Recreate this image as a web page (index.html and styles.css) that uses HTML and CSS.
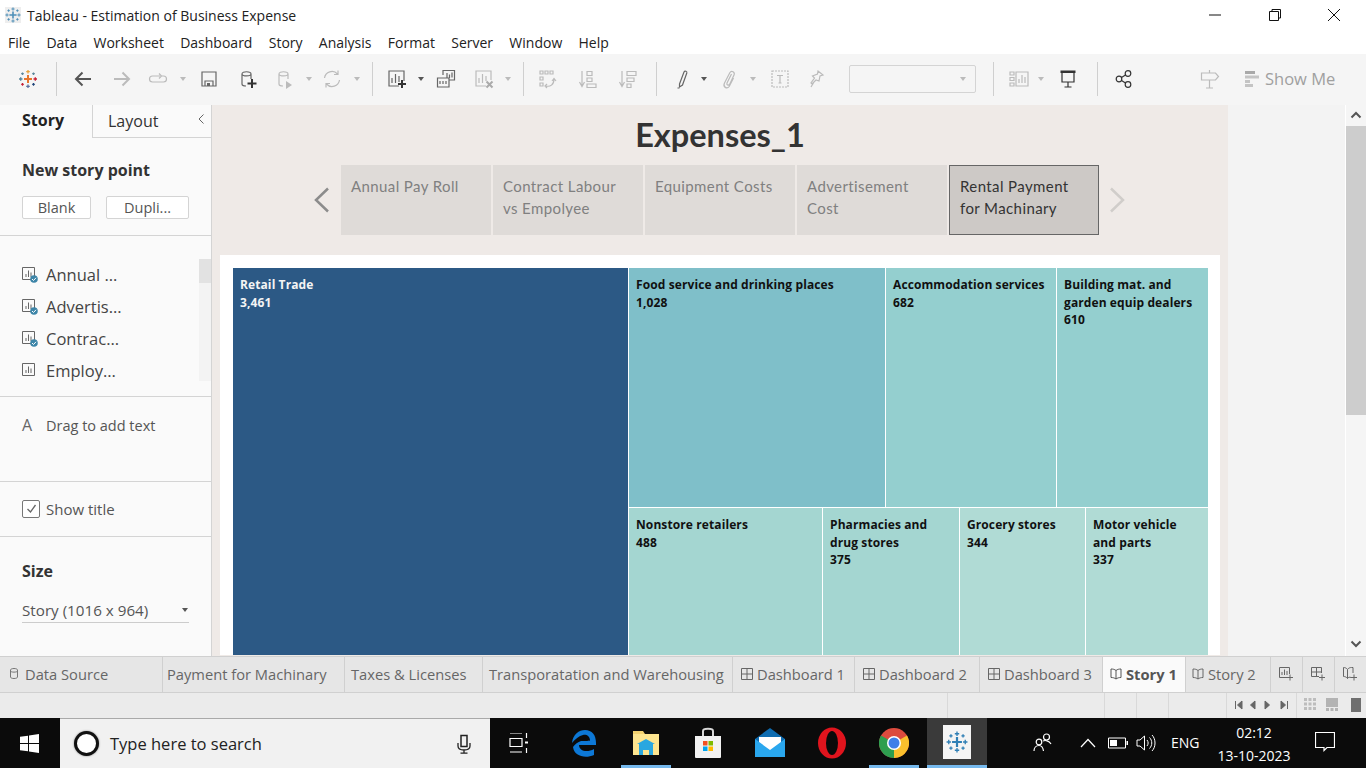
FILE: index.html
```html
<!DOCTYPE html>
<html lang="en">
<head>
    <meta charset="UTF-8">
    <title>Tableau - Estimation of Business Expense</title>
    <link rel="stylesheet" href="styles.css">
</head>
<body>
    <svg class="defs" width="0" height="0">
        <symbol id="sheet" viewBox="0 0 14 14"><path d="M.5.5h12v12H.5z" fill="none" stroke="currentColor"/><path d="M4 10V7M6.500 10V3.500M9 10V5.500" stroke="currentColor" fill="none"/></symbol>
        <symbol id="check" viewBox="0 0 8 8"><circle cx="4" cy="4" r="3.800" fill="#3d85a8"/><path d="M2 4l1.500 1.500L6 2.800" fill="none" stroke="#fff"/></symbol>
        <symbol id="tab-dash" viewBox="0 0 12 12"><path d="M.5.5h11v11H.5zM6 .5v11M.5 6h11" fill="none" stroke="currentColor"/></symbol>
        <symbol id="tab-story" viewBox="0 0 12 12"><path d="M6 2.500C4.500 1.300 3 1 1 1v8.500c2 0 3.500.4 5 1.500 1.500-1.100 3-1.500 5-1.500V1C9 1 7.500 1.300 6 2.500zM6 2.500V11" fill="none" stroke="currentColor"/></symbol>
        <symbol id="logo" viewBox="0 0 20 20"><path d="M10 5.500v9M5.500 10h9" stroke-width="2" stroke="currentColor"/><path d="M10 .5v4M8 2.500h4M10 15.500v4M8 17.500h4M.5 10h4M2.500 8v4M15.500 10h4M17.500 8v4M4.500 3v3M3 4.500h3M15.500 3v3M14 4.500h3M4.500 14v3M3 15.500h3M15.500 14v3M14 15.500h3" stroke-width="1.200" stroke="currentColor" fill="none"/></symbol>
    </svg>

    <div class="titlebar">
        <svg class="app-icon" width="16" height="16"><use href="#logo"/></svg>
        <span class="app-title">Tableau - Estimation of Business Expense</span>
        <div class="win-buttons">
            <svg width="14" height="14" viewBox="0 0 14 14"><path d="M1 7h12" stroke="#111"/></svg>
            <svg width="14" height="14" viewBox="0 0 14 14"><path d="M1.500 3.500h9v9h-9zM4 3.500V1.500h8.500V10h-2" fill="none" stroke="#111"/></svg>
            <svg width="14" height="14" viewBox="0 0 14 14"><path d="M1 1l12 12M13 1L1 13" stroke="#111"/></svg>
        </div>
    </div>

    <div class="menubar">
        <span>File</span><span>Data</span><span>Worksheet</span><span>Dashboard</span><span>Story</span><span>Analysis</span><span>Format</span><span>Server</span><span>Window</span><span>Help</span>
    </div>

    <div class="toolbar">
        <svg class="ti logo-multi" viewBox="0 0 20 20"><path d="M10 6v8" stroke="#e8762c" stroke-width="2"/><path d="M6 10h8" stroke="#e8762c" stroke-width="2"/><path d="M10 1v3.500M8.200 2.700h3.600" stroke="#e8a33d" stroke-width="1.300"/><path d="M10 15.500V19M8.200 17.300h3.600" stroke="#5b6f9e" stroke-width="1.300"/><path d="M1 10h3.500M2.700 8.200v3.600" stroke="#59879b" stroke-width="1.300"/><path d="M15.500 10H19M17.300 8.200v3.600" stroke="#c72035" stroke-width="1.300"/><path d="M4.500 3.500v2.500M3.200 4.700h2.600M15.500 3.500v2.500M14.200 4.700h2.600" stroke="#5b879b" stroke-width="1.200"/><path d="M4.500 14v2.800M3.200 15.400h2.600" stroke="#c72035" stroke-width="1.200"/><path d="M15.500 14v2.800M14.200 15.400h2.600" stroke="#1f447a" stroke-width="1.200"/></svg>
        <i class="tsep ml-18"></i>
        <svg class="ti ml-16" viewBox="0 0 20 20"><path d="M18 10H3M9.500 3.500L3 10l6.500 6.500" class="ic-dark"/></svg>
        <svg class="ti ml-19" viewBox="0 0 20 20"><path d="M2 10h15M10.500 3.500L17 10l-6.500 6.500" class="ic-faint-bold"/></svg>
        <svg class="ti ml-16" viewBox="0 0 20 20"><path d="M12 7H4.500a2.500 2.500 0 0 0 0 6h11a2.500 2.500 0 0 0 0-6H14M11 4.500L13.500 7 11 9.500" class="ic-faint"/></svg>
        <i class="caret ml-12"></i>
        <svg class="ti ml-12" viewBox="0 0 20 20"><path d="M3 3h14v14H3zM6 17v-5h8v5" class="ic-mid"/><path d="M8 14h3v3H8z" fill="#666"/></svg>
        <svg class="ti ml-19" viewBox="0 0 20 20"><path d="M4 5c0-3 9-3 9 0v5M4 5c0 2.500 9 2.500 9 0M4 5v10c0 1 1.500 2 4 2" class="ic-mid"/><path d="M14 10v9M9.500 14.500h9" stroke="#333" stroke-width="2"/></svg>
        <svg class="ti ml-17" viewBox="0 0 20 20"><path d="M4 5c0-3 9-3 9 0v5M4 5c0 2.500 9 2.500 9 0M4 5v10c0 1 1.500 2 4 2" class="ic-faint"/><path d="M11 12l6 4-6 4z" fill="#bbb"/></svg>
        <i class="caret ml-11"></i>
        <svg class="ti ml-9" viewBox="0 0 20 20"><path d="M2.500 9a7.500 7.500 0 0 1 13-4M17.500 11a7.500 7.500 0 0 1-13 4M16 1.500V5.500h-4M4 18.500V14.500h4" class="ic-faint"/></svg>
        <i class="caret ml-12"></i>
        <i class="tsep ml-11"></i>
        <svg class="ti ml-14" viewBox="0 0 20 20"><path d="M12 17H2V2h15v10" class="ic-mid"/><path d="M5 14V9M8.500 14V5M12 13V7" class="ic-mid"/><path d="M15 11v8M11 15h8" stroke="#333" stroke-width="2"/></svg>
        <i class="caret caret-dark ml-11"></i>
        <svg class="ti ml-11" viewBox="0 0 20 20"><path d="M7 6V1.500h11.500V11H13" class="ic-mid"/><path d="M1.500 9H13v9H1.500zM11 4v5M13.500 5.500V9M16 3.500v5M4 12v3M7 12v3M10 12v3" class="ic-mid"/></svg>
        <svg class="ti ml-18" viewBox="0 0 20 20"><path d="M12 17H2V2h15v9" class="ic-faint"/><path d="M5 14V9M8.500 14V5M12 12V7" class="ic-faint"/><path d="M12.500 12.500l6 6M18.500 12.500l-6 6" stroke="#aaa" stroke-width="2"/></svg>
        <i class="caret ml-11"></i>
        <i class="tsep ml-11"></i>
        <svg class="ti ml-14" viewBox="0 0 20 20"><path d="M2 2h3v3H2zM7 2h3v3H7zM12 2h3v3h-3zM2 8h3v3H2zM2 14h3v3H2zM8 17c4 1 8-1 8-7M14 12l2-2.500 2 2.500M9 15l-2 2 2 2" class="ic-faint"/></svg>
        <svg class="ti ml-20" viewBox="0 0 20 20"><path d="M4 2v15M1.500 13L4 17.500 6.500 13M9 2.500h5v4H9zM9 9h5v3.500H9zM9 15h9v3.500H9z" class="ic-faint"/></svg>
        <svg class="ti ml-20" viewBox="0 0 20 20"><path d="M4 2v15M1.500 13L4 17.500 6.500 13M9 2.500h9v4H9zM9 9h7v3.500H9zM9 15h4v3.500H9z" class="ic-faint"/></svg>
        <i class="tsep ml-18"></i>
        <svg class="ti ml-16" viewBox="0 0 20 20"><path d="M6.500 15l4.500-12c.8-1.500 3.300-.7 2.800 1L9.500 16l-3 2zM4.500 19h2" class="ic-mid"/></svg>
        <i class="caret caret-dark ml-8"></i>
        <svg class="ti ml-11" viewBox="0 0 20 20"><path d="M12.500 5L8 14c-.8 2 1.500 3 2.700 1.200L15 6c1.300-3-2.500-5-4.200-2.300L5.500 14c-2 4 2.500 6.500 4.700 3.500L14.500 9" class="ic-faint"/></svg>
        <i class="caret ml-11"></i>
        <svg class="ti ml-13" viewBox="0 0 20 20"><path d="M2 2h16v16H2z" class="ic-faint dashed"/><path d="M7 6.500h6M10 6.500v7.500M8.500 14h3" class="ic-faint"/></svg>
        <svg class="ti ml-17" viewBox="0 0 20 20"><path d="M11 2l5 4-3 1-1 5-3-1-4 4-1-1 3.500-5-2-2 5-2zM4 18l3-5" class="ic-faint"/></svg>
        <div class="tselect ml-22"><i class="caret"></i></div>
        <i class="tsep ml-17"></i>
        <svg class="ti ml-15" viewBox="0 0 20 20"><path d="M1 3h4v3H1zM1 8.500h4v3H1zM1 14h4v3H1zM7 3h12v14H7zM10 14v-4M13 14V6M16 14v-6" class="ic-faint"/></svg>
        <i class="caret ml-9"></i>
        <svg class="ti ml-13" viewBox="0 0 20 20"><path d="M4 3v10h12V3M10 13v5M6.500 18h7" class="ic-dark-thin"/><path d="M2.500 1.500h15v2.500h-15z" fill="#333"/></svg>
        <i class="tsep ml-19"></i>
        <svg class="ti ml-16" viewBox="0 0 20 20"><circle cx="5" cy="10" r="2.800" class="ic-dark-thin"/><circle cx="14" cy="4.500" r="2.800" class="ic-dark-thin"/><circle cx="14" cy="15.500" r="2.800" class="ic-dark-thin"/><path d="M7.500 8.500l4-2.500M7.500 11.500l4 2.500" class="ic-dark-thin"/></svg>
        <svg class="ti ml-66" viewBox="0 0 20 20"><path d="M1.500 4h14l3 3.500-3 3.500h-14zM9.500 1v3M9.500 11v8M6 19h7" class="ic-faint"/></svg>
        <svg class="showme-icon ml-25" viewBox="0 0 14 16"><path d="M0 0h10v3H0z" fill="#a9a9a9"/><path d="M0 4.500h14v3H0z" fill="#c4c4c4"/><path d="M0 9h5v3H0zM0 13h8v3H0z" fill="#c4c4c4"/></svg>
        <span class="showme">Show Me</span>
    </div>

    <div class="main">
        <aside class="panel">
            <div class="panel-tabs">
                <div class="ptab ptab-on">Story</div>
                <div class="ptab ptab-off">Layout<svg class="collapse" width="8" height="12" viewBox="0 0 8 12"><path d="M6.500 1.500L2 6l4.500 4.500" fill="none" stroke="#666"/></svg></div>
            </div>
            <section class="psec sec-new">
                <h3>New story point</h3>
                <div class="pbtns">
                    <button class="pbtn btn-blank">Blank</button>
                    <button class="pbtn btn-dup">Dupli...</button>
                </div>
            </section>
            <section class="psec sec-list">
                <div class="sheet-list">
                    <div class="sheet-row"><span class="sheet-ic"><svg width="14" height="14"><use href="#sheet"/></svg><svg class="tick" width="8" height="8"><use href="#check"/></svg></span>Annual ...</div>
                    <div class="sheet-row"><span class="sheet-ic"><svg width="14" height="14"><use href="#sheet"/></svg><svg class="tick" width="8" height="8"><use href="#check"/></svg></span>Advertis...</div>
                    <div class="sheet-row"><span class="sheet-ic"><svg width="14" height="14"><use href="#sheet"/></svg><svg class="tick" width="8" height="8"><use href="#check"/></svg></span>Contrac...</div>
                    <div class="sheet-row"><span class="sheet-ic"><svg width="14" height="14"><use href="#sheet"/></svg></span>Employ...</div>
                </div>
                <div class="list-scroll"><div class="list-thumb"></div></div>
            </section>
            <section class="psec sec-text">
                <span class="big-a">A</span><span>Drag to add text</span>
            </section>
            <section class="psec sec-check">
                <span class="checkbox"><svg width="11" height="10" viewBox="0 0 11 10"><path d="M1.500 5l3 3 5-7" fill="none" stroke="#666" stroke-width="1.300"/></svg></span><span>Show title</span>
            </section>
            <section class="sec-size">
                <h3>Size</h3>
                <div class="size-select">Story (1016 x 964)<i class="caret caret-dark"></i></div>
            </section>
        </aside>

        <div class="canvas">
            <h1 class="story-title">Expenses_1</h1>
            <div class="story-nav">
                <svg class="nav-arrow" width="18" height="26" viewBox="0 0 18 26"><path d="M15 1.500L3 13l12 11.500" fill="none" stroke="#8c8c8c" stroke-width="2.500"/></svg>
                <div class="point">Annual Pay Roll</div>
                <div class="point">Contract Labour vs Empolyee</div>
                <div class="point">Equipment Costs</div>
                <div class="point">Advertisement Cost</div>
                <div class="point point-on">Rental Payment for Machinary</div>
                <svg class="nav-arrow" width="18" height="26" viewBox="0 0 18 26"><path d="M3 1.500L15 13 3 24.500" fill="none" stroke="#d0cdca" stroke-width="2.500"/></svg>
            </div>
            <div class="viz-card">
                <div class="treemap">
                    <div class="cell cell-retail"><b>Retail Trade</b><b>3,461</b></div>
                    <div class="tm-right">
                        <div class="tm-row tm-top">
                            <div class="cell cell-food"><b>Food service and drinking places</b><b>1,028</b></div>
                            <div class="cell cell-mid w-acc"><b>Accommodation services</b><b>682</b></div>
                            <div class="cell cell-mid w-build"><b>Building mat. and garden equip dealers</b><b>610</b></div>
                        </div>
                        <div class="tm-row tm-bottom">
                            <div class="cell cell-low w-non"><b>Nonstore retailers</b><b>488</b></div>
                            <div class="cell cell-low w-pharm"><b>Pharmacies and drug stores</b><b>375</b></div>
                            <div class="cell cell-pale w-groc"><b>Grocery stores</b><b>344</b></div>
                            <div class="cell cell-pale w-motor"><b>Motor vehicle and parts</b><b>337</b></div>
                        </div>
                    </div>
                </div>
            </div>
        </div>

        <div class="gutter"></div>
        <div class="vscroll">
            <svg width="12" height="8" viewBox="0 0 12 8"><path d="M1.500 6.500L6 2l4.500 4.500" fill="none" stroke="#555" stroke-width="2"/></svg>
            <div class="vthumb"></div>
            <svg width="12" height="8" viewBox="0 0 12 8"><path d="M1.500 1.500L6 6l4.500-4.500" fill="none" stroke="#555" stroke-width="2"/></svg>
        </div>
    </div>

    <div class="tabs">
        <div class="tab tab-source"><svg width="8" height="11" viewBox="0 0 8 11"><path d="M.5 2c0-2 7-2 7 0v7c0 2-7 2-7 0zM.5 3c0 1.500 7 1.500 7 0" fill="none" stroke="#777"/></svg>Data Source</div>
        <div class="tab tab-pay">Payment for Machinary</div>
        <div class="tab tab-tax">Taxes &amp; Licenses</div>
        <div class="tab tab-trans">Transporatation and Warehousing</div>
        <div class="tab tab-d1"><svg width="12" height="12"><use href="#tab-dash"/></svg>Dashboard 1</div>
        <div class="tab tab-d2"><svg width="12" height="12"><use href="#tab-dash"/></svg>Dashboard 2</div>
        <div class="tab tab-d3"><svg width="12" height="12"><use href="#tab-dash"/></svg>Dashboard 3</div>
        <div class="tab tab-on"><svg width="12" height="12"><use href="#tab-story"/></svg>Story 1</div>
        <div class="tab tab-s2"><svg width="12" height="12"><use href="#tab-story"/></svg>Story 2</div>
        <div class="tab tab-new"><svg width="16" height="16" viewBox="0 0 16 16"><path d="M10 11.500H1.500V1.500h10V8M4 9V6M6.500 9V3.500M9 9V5M12 8.500v6M9 11.500h6" fill="none" stroke="#666"/></svg></div>
        <div class="tab tab-new"><svg width="16" height="16" viewBox="0 0 16 16"><path d="M9 10.500H1.500v-9h10V7M6.500 1.500v9M1.500 6h10M12 8.500v6M9 11.500h6" fill="none" stroke="#666"/></svg></div>
        <div class="tab tab-new"><svg width="16" height="16" viewBox="0 0 16 16"><path d="M9 11.500c-1.500-.5-2.500-.5-3.500 1-1-1.500-2.500-2-4-2v-9c1.500 0 3 .5 4 2 1-1.500 2.500-2 4-2h1.500V7M5.500 3.500v9M12 8.500v6M9 11.500h6" fill="none" stroke="#666"/></svg></div>
    </div>

    <div class="statusbar">
        <i class="st st-1"></i><i class="st st-2"></i><i class="st st-3"></i><i class="st st-4"></i><i class="st st-5"></i>
        <svg class="pager" width="60" height="10" viewBox="0 0 60 10"><path d="M1.500 1v8M8 1L3.500 5 8 9zM21 1l-4.500 4L21 9zM31 1l4.500 4L31 9zM47 1l4.500 4L47 9zM53.500 1v8" fill="#666" stroke="#666"/></svg>
        <i class="st st-6"></i>
        <svg class="views" width="58" height="14" viewBox="0 0 58 14"><path d="M0 0h3v3H0zM4.500 0h3v3h-3zM9 0h3v3H9zM0 4.500h3v3H0zM4.500 4.500h3v3h-3zM9 4.500h3v3H9zM0 9h3v3H0zM4.500 9h3v3h-3zM9 9h3v3H9z" fill="#bdbdbd"/><path d="M22 0h12v9H22zM22 10h3v3h-3zM26.500 10h3v3h-3zM31 10h3v3h-3z" fill="#b3b3b3"/><path d="M47 0h10v14H47z" fill="#6f6f6f"/></svg>
    </div>

    <div class="taskbar">
        <svg class="start" width="19" height="19" viewBox="0 0 19 19"><path d="M0 2.800l8-1.100v7.300H0zM9 1.500L19 0v9H9zM0 10h8v7.300l-8-1.100zM9 10h10v9L9 17.500z" fill="#fff"/></svg>
        <div class="searchbox">
            <span class="cortana"></span>
            <span class="search-text">Type here to search</span>
            <svg width="14" height="20" viewBox="0 0 14 20"><path d="M4 1.500h6v11H4z" fill="none" stroke="#222" stroke-width="1.500"/><path d="M1 9v3c0 3 2.500 4 6 4s6-1 6-4V9M7 16v3M3.500 19.200h7" fill="none" stroke="#222" stroke-width="1.300"/></svg>
        </div>
        <div class="task-apps">
            <div class="task w-view"><svg width="20" height="20" viewBox="0 0 20 20"><path d="M1 0h12M1 5.500h12v8H1zM1 19h12M17.500 0v5M17.500 15v5" fill="none" stroke="#fff" stroke-width="1.200"/><path d="M16 8.500h3v2h-3z" fill="#fff"/></svg></div>
            <div class="task"><svg width="26" height="28" viewBox="0 0 26 28"><path d="M1 14C2 5 8 1 14 1c7 0 11 5 11 13v2H8c0 6 8 8 15 4v6c-9 4-20 1-21-8 2-3 5-5 8-6 1 0 8 0 9-.500C19 7 15 5 12 6 8 7 4 10 1 14z" fill="#0d78d6"/></svg></div>
            <div class="task task-open"><svg width="28" height="28" viewBox="0 0 28 28"><path d="M1 2h10l2 3H1z" fill="#f3d26f"/><path d="M1 5h26v21H1z" fill="#fde58f"/><path d="M7 26V15h14v11h-4v-5h-6v5z" fill="#29a7e0"/><path d="M5 15l9-5 9 5z" fill="#29a7e0"/></svg></div>
            <div class="task"><svg width="30" height="32" viewBox="0 0 30 32"><path d="M2 9h26v21a1 1 0 0 1-1 1H3a1 1 0 0 1-1-1z" fill="#f2f2f2"/><path d="M10 9V4c0-3 10-3 10 0v5" fill="none" stroke="#d8d8d8" stroke-width="2"/><path d="M10 14h4.500v4.500H10z" fill="#f25022"/><path d="M15.500 14H20v4.500h-4.500z" fill="#7fba00"/><path d="M10 19.500h4.500V24H10z" fill="#00a4ef"/><path d="M15.500 19.500H20V24h-4.500z" fill="#ffb900"/></svg></div>
            <div class="task"><svg width="30" height="30" viewBox="0 0 30 30"><path d="M0 11L15 0l15 11v18H0z" fill="#0f6cb0"/><path d="M4 9h22v7l-11 7-11-7z" fill="#fff"/><path d="M0 11l15 11 15-11v18H0z" fill="#2aa7ee"/></svg></div>
            <div class="task"><svg width="30" height="32" viewBox="0 0 30 32"><ellipse cx="15" cy="16" rx="14" ry="15.500" fill="#e0141d"/><ellipse cx="15" cy="16" rx="6" ry="12" fill="#0a0a0a"/></svg></div>
            <div class="task task-open"><svg width="30" height="30" viewBox="0 0 30 30"><circle cx="15" cy="15" r="15" fill="#dd4b3e"/><path d="M15 15L28 7.500A15 15 0 0 1 15 30z" fill="#fbc02d"/><path d="M15 15L15 30A15 15 0 0 1 2 7.500z" fill="#2e9e4f"/><circle cx="15" cy="15" r="7" fill="#fff"/><circle cx="15" cy="15" r="5.500" fill="#3f7fe8"/></svg></div>
            <div class="task task-active"><span class="tb-tile"><svg width="22" height="22"><use href="#logo"/></svg></span></div>
        </div>
        <div class="tray">
            <svg class="t-people" width="20" height="20" viewBox="0 0 20 20"><circle cx="13.500" cy="5" r="3" fill="none" stroke="#fff" stroke-width="1.200"/><circle cx="6" cy="10" r="2.800" fill="none" stroke="#fff" stroke-width="1.200"/><path d="M1 19c0-3 2-5.500 5-5.500s4 2 4.500 5.500M10 9c2-1 6-.5 8 3" fill="none" stroke="#fff" stroke-width="1.200"/></svg>
            <svg class="t-up" width="16" height="10" viewBox="0 0 16 10"><path d="M1 9l7-7.500L15 9" fill="none" stroke="#fff" stroke-width="1.200"/></svg>
            <svg class="t-batt" width="20" height="12" viewBox="0 0 20 12"><path d="M.5 1h17v10H.5z" fill="none" stroke="#fff"/><path d="M2 3h7v6H2zM18.500 4H20v4h-1.500z" fill="#fff"/></svg>
            <svg class="t-vol" width="20" height="18" viewBox="0 0 20 18"><path d="M1 6h3l4.500-4v14L4 12H1zM11 6c1.500 2 1.500 4 0 6M13.500 3.500c3 3 3 8 0 11M16 1c4 4 4 12 0 16" fill="none" stroke="#fff"/></svg>
            <span class="t-lang">ENG</span>
            <div class="clock"><span>02:12</span><span>13-10-2023</span></div>
            <svg class="t-note" width="20" height="20" viewBox="0 0 20 20"><path d="M.5.5h19v15H12l-3 3v-3H.5z" fill="none" stroke="#fff" stroke-width="1.200"/></svg>
        </div>
    </div>
</body>
</html>
```

FILE: styles.css
```css
* {
    margin: 0;
    padding: 0;
    box-sizing: border-box;
}

html, body {
    height: 100%;
}

body {
    width: 1366px;
    height: 768px;
    overflow: hidden;
    display: flex;
    flex-direction: column;
    font-family: 'Open Sans', 'Liberation Sans', sans-serif;
    font-size: 14px;
    color: #333;
    background: #fff;
}

.defs {
    position: absolute;
}

/* title + menu */
.titlebar {
    height: 30px;
    display: flex;
    align-items: center;
    padding-left: 5px;
    background: #fff;
    color: #222;
}

.app-icon {
    color: #4f8fb8;
    background: #eee;
    flex: none;
}

.app-title {
    margin-left: 6px;
    font-size: 14px;
}

.win-buttons {
    margin-left: auto;
    width: 158px;
    padding-right: 25px;
    display: flex;
    justify-content: space-between;
}

.menubar {
    height: 24px;
    display: flex;
    align-items: center;
    gap: 16.3px;
    padding-left: 8px;
    color: #222;
    background: #fff;
}

/* toolbar */
.toolbar {
    height: 51px;
    display: flex;
    align-items: center;
    padding: 0 0 1px 18px;
    background: #f5f5f5;
}

.ti {
    width: 20px;
    height: 20px;
    flex: none;
    overflow: visible;
}

.ic-dark, .ic-mid, .ic-faint, .ic-faint-bold, .ic-dark-thin {
    fill: none;
}

.ic-dark {
    stroke: #555;
    stroke-width: 2;
}

.ic-dark-thin {
    stroke: #333;
    stroke-width: 1.2;
}

.ic-mid {
    stroke: #666;
    stroke-width: 1.2;
}

.ic-faint {
    stroke: #bbb;
    stroke-width: 1.2;
}

.ic-faint-bold {
    stroke: #bbb;
    stroke-width: 2;
}

.dashed {
    stroke-dasharray: 2 1;
}

.tsep {
    width: 1px;
    height: 34px;
    background: #cfcfcf;
    flex: none;
}

/* 7px wide in the toolbar: 3+3 of border and 1 of margin */
.caret {
    width: 0;
    height: 0;
    flex: none;
    margin-right: 1px;
    border-left: 3px solid transparent;
    border-right: 3px solid transparent;
    border-top: 4px solid #bbb;
}

.caret-dark {
    border-top-color: #555;
}

.tselect {
    width: 127px;
    height: 28px;
    flex: none;
    display: flex;
    align-items: center;
    justify-content: flex-end;
    padding-right: 8px;
    border: 1px solid #d4d4d4;
    border-radius: 2px;
}

.showme-icon {
    width: 14px;
    height: 16px;
    flex: none;
}

.showme {
    margin: 0 0 2px 6px;
    font-size: 16.5px;
    color: #a0a0a0;
}

.ml-8 { margin-left: 8px; }
.ml-9 { margin-left: 9px; }
.ml-11 { margin-left: 11px; }
.ml-12 { margin-left: 12px; }
.ml-13 { margin-left: 13px; }
.ml-14 { margin-left: 14px; }
.ml-15 { margin-left: 15px; }
.ml-16 { margin-left: 16px; }
.ml-17 { margin-left: 17px; }
.ml-18 { margin-left: 18px; }
.ml-19 { margin-left: 19px; }
.ml-20 { margin-left: 20px; }
.ml-22 { margin-left: 22px; }
.ml-25 { margin-left: 25px; }
.ml-66 { margin-left: 66px; }

/* main area */
.main {
    height: 551px;
    display: flex;
    overflow: hidden;
}

.panel {
    width: 212px;
    flex: none;
    background: #fafafa;
    border-right: 1px solid #d4d4d4;
    color: #444;
}

.panel-tabs {
    height: 33px;
    display: flex;
}

.ptab {
    font-size: 16px;
    display: flex;
    align-items: center;
}

.ptab-on {
    width: 93px;
    padding: 0 0 3px 22px;
    font-weight: bold;
    color: #222;
    border-right: 1px solid #d4d4d4;
}

.ptab-off {
    flex: 1;
    padding-left: 15px;
    justify-content: space-between;
    padding-right: 6px;
    border-bottom: 1px solid #d4d4d4;
    color: #333;
}

.collapse {
    margin-bottom: 4px;
}

.psec {
    border-bottom: 1px solid #d4d4d4;
}

.psec h3, .sec-size h3 {
    font-size: 16px;
    color: #333;
}

.sec-new {
    height: 98px;
    padding: 21px 22px 0;
}

.pbtns {
    display: flex;
    gap: 15px;
    margin-top: 15px;
}

.pbtn {
    height: 23px;
    font-family: inherit;
    font-size: 14.5px;
    color: #555;
    background: #fff;
    border: 1px solid #d4d4d4;
    border-radius: 2px;
}

.btn-blank {
    width: 69px;
}

.btn-dup {
    width: 83px;
}

.sec-list {
    height: 161px;
    padding-top: 23px;
    display: flex;
    justify-content: space-between;
}

.sheet-list {
    margin-top: -1px;
    padding-left: 22px;
}

.sheet-row {
    height: 32px;
    display: flex;
    align-items: center;
    font-size: 16.5px;
    color: #444;
}

.sheet-ic {
    position: relative;
    width: 24px;
    height: 14px;
    color: #666;
    flex: none;
}

.sheet-ic svg {
    display: block;
}

.sheet-ic .tick {
    position: absolute;
    left: 8px;
    top: 8px;
}

.list-scroll {
    width: 12px;
    height: 122px;
    background: #f3f3f3;
}

.list-thumb {
    height: 24px;
    background: #e2e2e2;
}

.sec-text {
    height: 85px;
    display: flex;
    align-items: flex-start;
    padding: 19px 0 0 22px;
    font-size: 14.5px;
    color: #555;
}

.big-a {
    width: 24px;
    font-size: 16px;
    line-height: 19px;
    color: #666;
}

.sec-check {
    height: 55px;
    display: flex;
    align-items: center;
    padding-left: 22px;
    font-size: 15px;
    color: #555;
}

.checkbox {
    width: 18px;
    height: 18px;
    margin-right: 6px;
    border: 1px solid #777;
    border-radius: 2px;
    background: #fff;
    display: flex;
    align-items: center;
    justify-content: center;
}

.sec-size {
    padding: 23px 22px 0;
}

.size-select {
    height: 25px;
    margin-top: 16px;
    display: flex;
    justify-content: space-between;
    align-items: center;
    font-size: 15.2px;
    color: #555;
    border-bottom: 1px solid #ccc;
}

/* story canvas */
.canvas {
    width: 1016px;
    flex: none;
    background: #efeae7;
    padding-top: 10px;
}

.story-title {
    height: 50px;
    font-family: 'Lato', sans-serif;
    font-size: 32.5px;
    font-weight: bold;
    line-height: 40px;
    text-align: center;
    color: #333;
}

.story-nav {
    height: 70px;
    display: flex;
    align-items: center;
    gap: 2px;
    padding-left: 101px;
}

.nav-arrow {
    flex: none;
}

.nav-arrow:first-child {
    margin-right: 8px;
}

.nav-arrow:last-child {
    margin-left: 7px;
}

.point {
    width: 150px;
    height: 70px;
    padding: 10px 12px 0 10px;
    font-family: 'Lato', sans-serif;
    font-size: 15px;
    letter-spacing: .4px;
    line-height: 22px;
    color: #808080;
    background: #dfdbd8;
}

.point-on {
    padding: 9px 11px 0 10px;
    color: #333;
    background: #cdc9c6;
    border: 1px solid #666;
}

.viz-card {
    height: 400px;
    margin: 20px 8px 0;
    padding: 13px 12px 0 13px;
    background: #fff;
}

.treemap {
    height: 387px;
    display: flex;
    gap: 1px;
    overflow: hidden;
}

.tm-right {
    width: 579px;
    display: flex;
    flex-direction: column;
    gap: 1px;
}

.tm-row {
    display: flex;
    gap: 1px;
}

.tm-top {
    height: 239px;
}

.tm-bottom {
    flex: 1;
}

.cell {
    display: flex;
    flex-direction: column;
    padding: 8px 7px;
    font-size: 12px;
    letter-spacing: .1px;
    line-height: 17.5px;
    color: #111;
}

.cell-retail {
    width: 395px;
    background: #2c5985;
    color: #f4f4f4;
}

.cell-food {
    width: 256px;
    background: #7fbfc9;
}

.cell-mid {
    background: #94cfcf;
}

.cell-low {
    background: #a4d6d1;
}

.cell-pale {
    background: #b0dbd5;
}

.w-acc { width: 170px; }
.w-build { width: 151px; }
.w-non { width: 193px; }
.w-pharm { width: 136px; }
.w-groc { width: 125px; }
.w-motor { width: 122px; }

.gutter {
    flex: 1;
    background: #f3f3f3;
}

.vscroll {
    width: 21px;
    flex: none;
    padding: 6px 0;
    display: flex;
    flex-direction: column;
    align-items: center;
    background: #f5f5f5;
    border-left: 1px solid #fff;
}

.vthumb {
    width: 100%;
    height: 289px;
    margin: 7px 0 225px;
    background: #cdcdcd;
}

/* sheet tabs */
.tabs {
    height: 37px;
    display: flex;
    background: #e6e6e6;
    border-top: 1px solid #d0d0d0;
    border-bottom: 1px solid #d0d0d0;
    font-size: 14.7px;
}

.tab {
    display: flex;
    align-items: center;
    gap: 4px;
    padding-left: 4px;
    padding-bottom: 2px;
    border-right: 1px solid #d0d0d0;
    color: #666;
    flex: none;
}

.tab-source { width: 163px; padding-left: 10px; gap: 7px; }
.tab-pay { width: 182px; }
.tab-tax { width: 138px; padding-left: 6px; }
.tab-trans { width: 250px; padding-left: 6px; }
.tab-d1 { width: 122px; padding-left: 8px; }
.tab-d2 { width: 125px; padding-left: 8px; }
.tab-d3 { width: 123px; padding-left: 8px; }
.tab-s2 { width: 85px; padding-left: 6px; }
.tab-new { width: 32px; padding-left: 7px; }

.tab-on {
    width: 83px;
    padding-left: 7px;
    font-weight: bold;
    color: #555;
    background: #fafafa;
}

.statusbar {
    position: relative;
    height: 25px;
    background: #ebebeb;
}

.st {
    position: absolute;
    top: 0;
    bottom: 0;
    width: 1px;
    background: #d9d9d9;
}

.st-1 { left: 947px; }
.st-2 { left: 1104px; }
.st-3 { left: 1136px; }
.st-4 { left: 1168px; }
.st-5 { left: 1226px; }
.st-6 { left: 1296px; }

.pager {
    position: absolute;
    left: 1234px;
    top: 7px;
}

.views {
    position: absolute;
    left: 1304px;
    top: 5px;
}

/* windows taskbar */
.taskbar {
    flex: 1;
    display: flex;
    align-items: center;
    background: #0b0b0b;
    color: #fff;
}

.start {
    margin-left: 20px;
    flex: none;
}

.searchbox {
    width: 430px;
    height: 100%;
    margin-left: 21px;
    display: flex;
    align-items: center;
    padding: 0 19px 0 14px;
    background: #f1f1f1;
    border-top: 1px solid #a9a9a9;
    color: #222;
}

.cortana {
    width: 25px;
    height: 25px;
    border: 3.5px solid #111;
    border-radius: 50%;
    background: #fff;
    box-shadow: 0 0 2px #777;
    flex: none;
}

.search-text {
    flex: 1;
    margin-left: 11px;
    font-size: 16.5px;
}

.task-apps {
    height: 100%;
    display: flex;
}

.task {
    position: relative;
    width: 62px;
    height: 100%;
    display: flex;
    align-items: center;
    justify-content: center;
}

.w-view {
    width: 63px;
    padding-right: 5px;
}

.task-open::after {
    content: "";
    position: absolute;
    left: 6px;
    right: 6px;
    bottom: 0;
    height: 3px;
    background: #76b9ed;
}

.task-active {
    width: 60px;
    margin-left: 2px;
    background: #3a3a3a;
    border-bottom: 3px solid #76b9ed;
}

.tb-tile {
    width: 28px;
    height: 34px;
    display: flex;
    align-items: center;
    justify-content: center;
    background: #f4f4f4;
    color: #2f7fb5;
}

.tray {
    flex: 1;
    height: 100%;
    position: relative;
}

.tray svg, .t-lang, .clock {
    position: absolute;
}

.t-people { left: 46px; top: 14px; }
.t-up { left: 93px; top: 20px; }
.t-batt { left: 121px; top: 19px; }
.t-vol { left: 149px; top: 16px; }

.t-lang {
    left: 184px;
    top: 15px;
    font-size: 14px;
}

.clock {
    left: 222px;
    top: 5px;
    width: 90px;
    display: flex;
    flex-direction: column;
    align-items: center;
    gap: 4px;
    font-size: 14px;
    line-height: 19px;
}

.t-note { left: 328px; top: 14px; }
```
